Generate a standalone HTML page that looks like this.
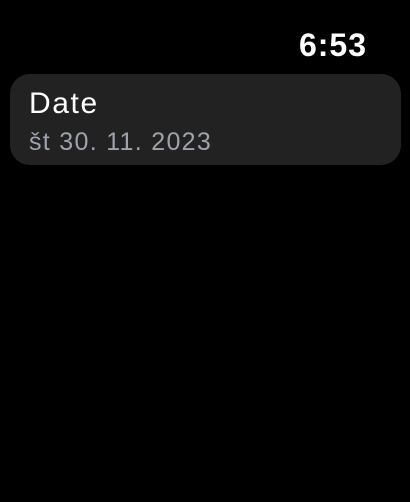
<!DOCTYPE html>
<html><head><style>
html,body{margin:0;padding:0;background:#000;width:410px;height:502px;overflow:hidden;font-family:"Liberation Sans",sans-serif;}
.time{position:absolute;right:43px;top:25px;color:#fff;font-size:32px;font-weight:bold;letter-spacing:1px;line-height:40px;}
.card{position:absolute;left:10px;top:74px;width:391px;height:91px;background:#222222;border-radius:20px;}
.t{position:absolute;left:19px;top:13px;color:#fff;font-size:30px;line-height:34px;letter-spacing:1.6px;}
.d{position:absolute;left:19px;top:53px;color:#9ea2ac;font-size:25px;line-height:30px;letter-spacing:1.3px;}
</style></head><body>
<div class="time">6:53</div>
<div class="card"><div class="t">Date</div><div class="d">št 30. 11. 2023</div></div>
</body></html>
